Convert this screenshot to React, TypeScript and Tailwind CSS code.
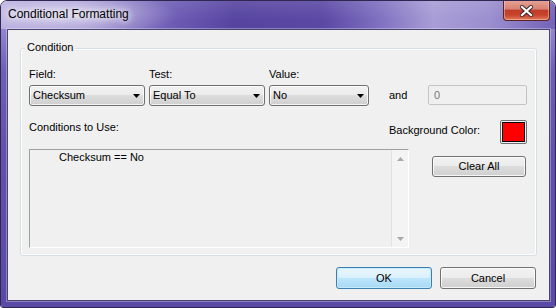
import React from 'react';

const uiFont = "font-['Liberation_Sans',Arial,sans-serif]";

// Win7 style drop-down list
function ComboBox({ value, width }: { value: string; width: string }) {
  return (
    <div
      className={`${width} h-[21px] flex items-center rounded-[3px] border border-[#707070] bg-[linear-gradient(#f2f2f2_0%,#ebebeb_50%,#dddddd_50%,#cfcfcf_100%)] shadow-[inset_0_0_0_1px_rgba(255,255,255,0.75)] pl-[3px] pr-[4px]`}
    >
      <span className="flex-1 leading-[13px] text-black">{value}</span>
      <svg width="7" height="4" viewBox="0 0 7 4">
        <path d="M0 0H7L3.5 4Z" fill="#000" />
      </svg>
    </div>
  );
}

// push button, OK gets the blue default look
function PushButton({ label, width, height, isDefault }: { label: string; width: string; height: string; isDefault?: boolean }) {
  return (
    <button
      className={`${width} ${height} shrink-0 rounded-[3px] border text-[11px] leading-[13px] text-black ${
        isDefault
          ? 'border-[#3c7fb1] bg-[linear-gradient(#eaf6fd_0%,#d9f0fc_50%,#bee6fd_50%,#a7d9f5_100%)] shadow-[inset_0_0_0_1px_#c4ebfd]'
          : 'border-[#707070] bg-[linear-gradient(#f2f2f2_0%,#ebebeb_50%,#dddddd_50%,#cfcfcf_100%)] shadow-[inset_0_0_0_1px_rgba(255,255,255,0.8)]'
      }`}
    >
      {label}
    </button>
  );
}

function CloseButton() {
  return (
    <div className="ml-auto -mt-[1px] w-[47px] h-[21px] flex items-center justify-center rounded-b-[4px] border border-t-0 border-[#5a2520] bg-[linear-gradient(#e6a597_0%,#d88172_45%,#c23d29_52%,#c8432c_75%,#e27a5e_100%)] shadow-[inset_0_0_0_1px_rgba(255,220,210,0.45)]">
      <svg width="13" height="12" viewBox="0 0 13 12" className="mt-[1px]">
        <path d="M2 2L11 10M11 2L2 10" stroke="#3a2a2a" strokeWidth="4.2" strokeLinecap="square" />
        <path d="M2 2L11 10M11 2L2 10" stroke="#ffffff" strokeWidth="2.2" strokeLinecap="square" />
      </svg>
    </div>
  );
}

export default function App() {
  return (
    <div className="w-[556px] h-[308px] bg-white">
      <div className={`w-full h-full flex flex-col rounded-t-[7px] rounded-b-[3px] border border-[#2e2850] overflow-hidden text-[11px] text-black ${uiFont}`}>
        {/* title bar */}
        <div className="h-[28px] shrink-0 flex items-start pl-[7px] pr-[5px] bg-[radial-gradient(ellipse_110px_24px_at_68px_14px,rgba(255,255,255,0.55),rgba(255,255,255,0)_100%),linear-gradient(180deg,rgba(255,255,255,0.1)_0%,rgba(255,255,255,0)_70%),linear-gradient(90deg,#b3a8dd_0%,#9c8ed0_15%,#6f5eb6_30%,#5644a1_42%,#5a48a4_58%,#7e6fc0_68%,#a89dd6_78%,#9b8fcf_88%,#7463b8_100%)]">
          <span className="mt-[6px] text-[12px] leading-[15px] [text-shadow:0_0_6px_#fff,0_0_10px_#fff]">Conditional Formatting</span>
          <CloseButton />
        </div>

        {/* frame + client area */}
        <div className="flex-1 flex pl-[6px] pr-[5px] pb-[6px] bg-[linear-gradient(180deg,#9486cd_0%,#6f5eb6_15%,#6250ac_45%,#5b49a6_100%)]">
          <div className="flex-1 flex flex-col bg-[#f0f0f0] border border-[#4a4470] shadow-[0_0_0_1px_rgba(255,255,255,0.3)] px-[12px]">
            {/* Condition group */}
            <div className="mt-[18px] h-[208px] shrink-0 flex flex-col rounded-[3px] border border-[#d5dfe5] shadow-[inset_0_0_0_1px_#fff] px-[8px]">
              <div className="-mt-[8px] -ml-[4px] w-fit px-[2px] bg-[#f0f0f0] leading-[13px]">Condition</div>

              {/* field / test / value */}
              <div className="mt-[14px] flex items-start">
                <div className="w-[116px] flex flex-col gap-[4px]">
                  <span className="leading-[13px]">Field:</span>
                  <ComboBox value="Checksum" width="w-[116px]" />
                </div>
                <div className="ml-[4px] w-[116px] flex flex-col gap-[4px]">
                  <span className="leading-[13px]">Test:</span>
                  <ComboBox value="Equal To" width="w-[116px]" />
                </div>
                <div className="ml-[4px] w-[100px] flex flex-col gap-[4px]">
                  <span className="leading-[13px]">Value:</span>
                  <ComboBox value="No" width="w-[100px]" />
                </div>
                <span className="ml-[20px] mt-[21px] w-[39px] leading-[13px]">and</span>
                <div className="mt-[17px] w-[99px] h-[20px] flex items-center rounded-[2px] border border-[#c2c4c8] pl-[5px] text-[#7a7a7a]">
                  <span className="leading-[13px]">0</span>
                </div>
              </div>

              {/* labels + colour */}
              <div className="mt-[14px] flex items-start">
                <span className="w-[360px] mt-[1px] leading-[13px]">Conditions to Use:</span>
                <span className="w-[111px] mt-[4px] leading-[13px]">Background Color:</span>
                <div className="w-[27px] h-[24px] rounded-[2px] border border-[#707070] p-[1px]">
                  <div className="w-full h-full border border-black bg-[#ff0000]" />
                </div>
              </div>

              {/* list + clear */}
              <div className="mt-[5px] flex items-start">
                <div className="w-[380px] h-[99px] flex border-t border-l border-[#a0a0a0] border-r-white border-b-white border-r border-b">
                  <div className="flex-1 pl-[29px]">
                    <div className="mt-[1px] leading-[13px]">Checksum == No</div>
                  </div>
                  <div className="w-[17px] flex flex-col justify-between border-l border-[#e2e2e2] bg-[#f4f4f4]">
                    <div className="h-[17px] flex items-center justify-center">
                      <svg width="7" height="4" viewBox="0 0 7 4">
                        <path d="M0 4H7L3.5 0Z" fill="#a9a9a9" />
                      </svg>
                    </div>
                    <div className="h-[17px] flex items-center justify-center">
                      <svg width="7" height="4" viewBox="0 0 7 4">
                        <path d="M0 0H7L3.5 4Z" fill="#a9a9a9" />
                      </svg>
                    </div>
                  </div>
                </div>
                <div className="ml-[23px] mt-[7px]">
                  <PushButton label="Clear All" width="w-[94px]" height="h-[21px]" />
                </div>
              </div>
            </div>

            {/* dialog buttons */}
            <div className="mt-[11px] flex justify-end gap-[8px] pr-[1px]">
              <PushButton label="OK" width="w-[96px]" height="h-[22px]" isDefault />
              <PushButton label="Cancel" width="w-[96px]" height="h-[22px]" />
            </div>
          </div>
        </div>
      </div>
    </div>
  );
}
